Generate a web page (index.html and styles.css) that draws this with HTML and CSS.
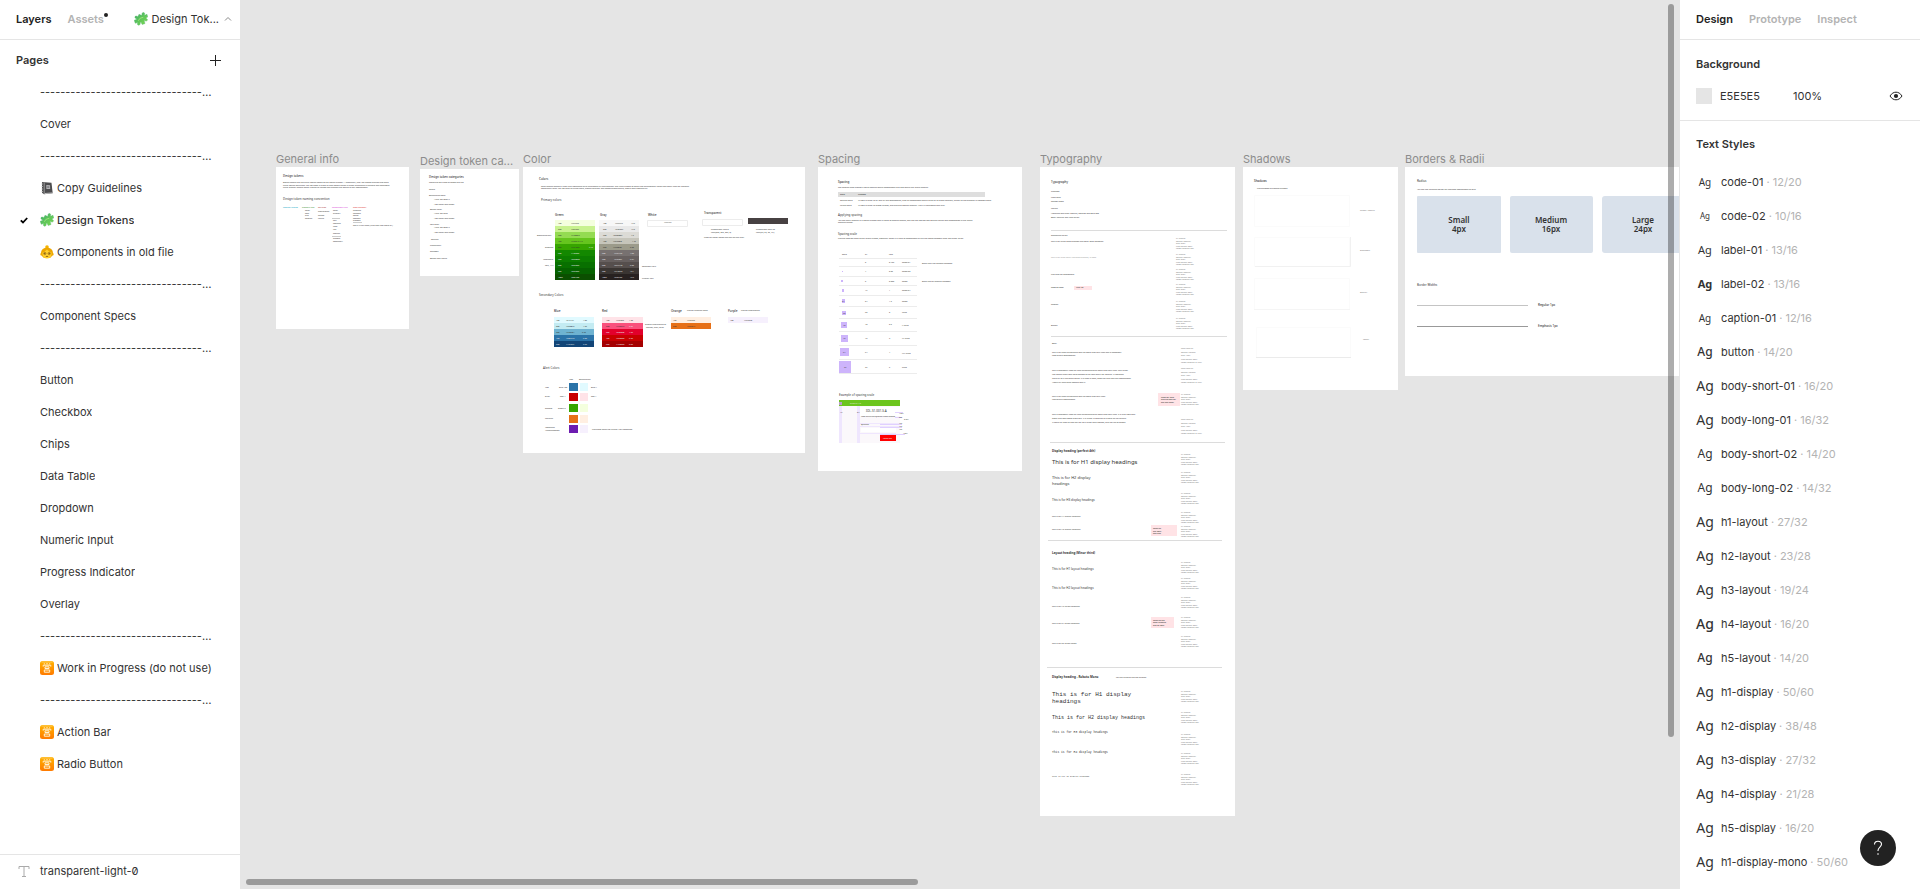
FILE: index.html
```html
<!DOCTYPE html>
<html lang="en">
<head>
<meta charset="utf-8">
<title>Design Tokens</title>
<link rel="stylesheet" href="styles.css">
</head>
<body>
<svg class="defs" aria-hidden="true">
  <defs>
    <linearGradient id="orange-fill" x1="0" y1="0" x2="0" y2="1"><stop offset="0" stop-color="#ffb300"/><stop offset="1" stop-color="#ff7a00"/></linearGradient>
    <linearGradient id="green-fill" x1="0" y1="0" x2="1" y2="1"><stop offset="0" stop-color="#3fae6a"/><stop offset="1" stop-color="#7fdc4c"/></linearGradient>
    <symbol id="puzzle" viewBox="0 0 14 14">
      <path d="M5 2.300 7.200 3.200C8 3.400 8.100 2.900 7.900 2.200 7.900.2 10.600 0 10.700 1.900 10.700 2.600 10.300 3 10.700 3.300L13 2.300 13.700 5 12 5.700C11.600 6.200 12 6.500 12.700 6.700 14.200 7.600 13.200 9.600 11.500 8.900 10.900 8.500 10.500 8.500 10.200 9L11 11.500 8.200 12.500 7.200 10.600C6.700 10.100 6.100 10.400 6.200 11.100 6.500 13 4.300 14 3.500 12.400 3.200 11.500 3.800 11.200 3.400 10.600L1.300 11.300.2 8.300 2.300 7.600C2.900 7.200 2.400 6.700 1.900 6.500.1 5.600 1 3.600 2.800 4.200 3.700 4.600 4.200 4.400 4.300 3.800Z" fill="url(#green-fill)" stroke="#54b56a" stroke-width=".4"/>
      <path d="M4.200 8.800 6.200 6.200 9.300 5.300" fill="none" stroke="#b4f080" stroke-width="1" opacity=".7"/>
    </symbol>
    <symbol id="notebook" viewBox="0 0 14 14">
      <path d="M2 1 11.500 1.800 12.700 12.300 4 13.200 2 11.800Z" fill="#4c4c4e"/>
      <path d="M4.200 1.500V13" stroke="#9a9a9a" stroke-width="1"/>
      <path d="M4.800 11.900 12.500 11.400V12.300L4.800 13Z" fill="#c9c9c9"/>
      <path d="M6.300 4 10 4.200 10.200 8 6.400 8Z" fill="#b5b5b8"/>
      <path d="M7.200 5.300H9.300V6.800H7.200Z" fill="#77777a"/>
      <path d="M1.500 3H3M1.500 5.500H3M1.500 8H3M1.500 10.500H3" stroke="#bbb" stroke-width=".8"/>
    </symbol>
    <symbol id="elder" viewBox="0 0 14 14">
      <circle cx="7" cy="2" r="1.800" fill="#f5b400"/>
      <path d="M1 8A6 5.500 0 0 1 13 8C14 8.500 13.800 10.500 12.500 10.500L10 13H4L1.500 10.500C.2 10.500 0 8.500 1 8Z" fill="#eda600"/>
      <path d="M2.500 7.500C4.500 7 6 5.500 7 4.500 8 5.500 9.500 7 11.500 7.500 12 11.500 9.500 13.500 7 13.500S2 11.500 2.500 7.500Z" fill="#ffd02f"/>
      <circle cx="4.800" cy="8.500" r="1.200" fill="none" stroke="#8b5a10" stroke-width=".6"/>
      <circle cx="9.200" cy="8.500" r="1.200" fill="none" stroke="#8b5a10" stroke-width=".6"/>
      <circle cx="4.800" cy="8.500" r=".6" fill="#4a3010"/><circle cx="9.200" cy="8.500" r=".6" fill="#4a3010"/>
      <path d="M5.800 11.600Q7 10.900 8.200 11.600" fill="none" stroke="#7a4a10" stroke-width=".8"/>
    </symbol>
    <symbol id="open-sign" viewBox="0 0 14 14">
      <rect width="14" height="14" rx="2.500" fill="url(#orange-fill)"/>
      <path d="M1.500 1H12.500" stroke="#ffd27a" stroke-width=".8"/>
      <path d="M4.200 2.300 4.800 3.500M7 2V3.500M9.800 2.300 9.200 3.500M3.200 5.600V4.200H10.800V5.600M5 5.800H9V7.500H5ZM4.300 9H9.700V11.200H4.300Z" fill="none" stroke="#fff3d6" stroke-width="1"/>
    </symbol>
    <g id="spec" class="t2 spec"><text><tspan x="0" y="1">h1-display</tspan><tspan x="0" y="4">weight: Regular</tspan><tspan x="0" y="6">Size: 27px</tspan><tspan x="0" y="9">Line-height: 32px</tspan><tspan x="0" y="11">Letter-spacing: 0px</tspan></text></g>
    <g id="spec-loose" class="t2 spec"><text><tspan x="0" y="1">body-long-01</tspan><tspan x="0" y="5">weight: Normal</tspan><tspan x="0" y="8">Size: 16px</tspan><tspan x="0" y="12">Line-height: 32px</tspan><tspan x="0" y="15">Letter-spacing: 0.16px</tspan></text></g>
  </defs>
</svg>
<div class="app">
  <aside class="panel left">
    <header class="panel-head">
      <button class="tab active">Layers</button>
      <button class="tab assets">Assets<span class="dot"></span></button>
      <button class="page-switch"><svg class="emoji"><use href="#puzzle"/></svg><span>Design Tok...</span>
        <svg class="chevron" viewBox="0 0 8 6"><path d="M1 4.500 4 1.500 7 4.500" fill="none" stroke="#8a8a8a"/></svg></button>
    </header>
    <div class="pages-head"><h2>Pages</h2>
      <button class="add" aria-label="Add page"><svg viewBox="0 0 11 11"><path d="M5.500 0V11M0 5.500H11" stroke="#222" fill="none"/></svg></button></div>
    <ul class="pages">
      <li><span class="name">--------------------------------------------------</span></li>
      <li><span class="name">Cover</span></li>
      <li><span class="name">--------------------------------------------------</span></li>
      <li><svg class="emoji"><use href="#notebook"/></svg><span class="name">Copy Guidelines</span></li>
      <li class="current"><svg class="tick" viewBox="0 0 8 7"><path d="M.8 3.300 3 5.500 7.200 1" fill="none" stroke="#000" stroke-width="1.800"/></svg><svg class="emoji"><use href="#puzzle"/></svg><span class="name">Design Tokens</span></li>
      <li><svg class="emoji"><use href="#elder"/></svg><span class="name">Components in old file</span></li>
      <li><span class="name">--------------------------------------------------</span></li>
      <li><span class="name">Component Specs</span></li>
      <li><span class="name">--------------------------------------------------</span></li>
      <li><span class="name">Button</span></li>
      <li><span class="name">Checkbox</span></li>
      <li><span class="name">Chips</span></li>
      <li><span class="name">Data Table</span></li>
      <li><span class="name">Dropdown</span></li>
      <li><span class="name">Numeric Input</span></li>
      <li><span class="name">Progress Indicator</span></li>
      <li><span class="name">Overlay</span></li>
      <li><span class="name">--------------------------------------------------</span></li>
      <li><svg class="emoji"><use href="#open-sign"/></svg><span class="name">Work in Progress (do not use)</span></li>
      <li><span class="name">--------------------------------------------------</span></li>
      <li><svg class="emoji"><use href="#open-sign"/></svg><span class="name">Action Bar</span></li>
      <li><svg class="emoji"><use href="#open-sign"/></svg><span class="name">Radio Button</span></li>
    </ul>
    <div class="layer"><svg class="type-icon" viewBox="0 0 12 11"><path d="M1 3V.5H11V3M6 .5V10.500M4 10.500H8" fill="none" stroke="#aaa"/></svg><span>transparent-light-0</span></div>
  </aside>

  <main class="canvas">
    <figure class="frame general"><figcaption>General info</figcaption>
      <svg viewBox="276 167 133 162">
        <text class="t3 strong" x="283" y="177">Design tokens</text>
        <text class="t2"><tspan x="283" y="183">Design tokens are the visual design atoms of the design system — specifically, they are named entities that store</tspan><tspan x="283" y="186">visual design attributes. We use them in place of hard-coded values in order to maintain a scalable and consistent</tspan><tspan x="283" y="188">visual system. Tokens make it easier to update and support the design of our components.</tspan></text>
        <text class="t3" x="283" y="200">Design token naming convention</text>
        <text class="t2" x="283" y="208" fill="#00a3c4">category-theme</text><text class="t2" x="302" y="208" fill="#2e8b2e">property-role</text><text class="t2" x="318" y="208" fill="#a33">attribute</text><text class="t2" x="332" y="208" fill="#d63ad6">component-type</text><text class="t2" x="353" y="208" fill="#d33">state-modifier</text>
        <path d="M332 218.500H340M332 236.500H341M353 222.500H362" stroke="#ccc"/>
        <text class="t2"><tspan x="305" y="211">color</tspan><tspan x="305" y="214">font</tspan><tspan x="305" y="216">size</tspan><tspan x="305" y="219">spacing</tspan><tspan x="318" y="212">background</tspan><tspan x="318" y="216">border</tspan><tspan x="318" y="219">radius</tspan><tspan x="333" y="211">color</tspan><tspan x="333" y="214">primary</tspan><tspan x="333" y="221">text</tspan><tspan x="333" y="224">heading</tspan><tspan x="333" y="227">label</tspan><tspan x="333" y="230">link</tspan><tspan x="333" y="234">caption</tspan><tspan x="333" y="239">success</tspan><tspan x="333" y="242">secondary</tspan><tspan x="353" y="211">disabled</tspan><tspan x="353" y="214">hovered</tspan><tspan x="353" y="216">active</tspan><tspan x="353" y="219">focused</tspan><tspan x="353" y="221">pressed</tspan><tspan x="353" y="226">add it if you need (blue-dark-low-hover-01)</tspan></text>
      </svg></figure>
    <figure class="frame categories"><figcaption>Design token ca...</figcaption>
      <svg viewBox="420 169 99 107">
        <text class="t3 strong" x="429" y="178">Design token categories</text>
        <text class="t2"><tspan x="429" y="183">These are the types of tokens we use</tspan><tspan x="429" y="190">Colors</tspan><tspan x="429" y="196">Background color</tspan><tspan x="434" y="200">• Why we need it</tspan><tspan x="434" y="205">• On hover and states</tspan><tspan x="430" y="210">Border color</tspan><tspan x="434" y="214">• Why we have</tspan><tspan x="434" y="219">• On hover and states</tspan><tspan x="430" y="225">Text color</tspan><tspan x="434" y="228">• Why we need it</tspan><tspan x="434" y="233">• On hover and states</tspan><tspan x="431" y="240">Spacing</tspan><tspan x="430" y="246">Typography</tspan><tspan x="430" y="252">Shadows</tspan><tspan x="430" y="259">Border and radius</tspan></text>
      </svg></figure>
    <figure class="frame color"><figcaption>Color</figcaption>
      <svg viewBox="523 167 282 286">
        <text class="t3 strong" x="539" y="180">Colors</text>
        <text class="t2"><tspan x="541" y="187">Color tokens support a clear and intentional style throughout all the products. The Finch system of colors has foundational values and many roles for theming</tspan><tspan x="541" y="189">meaningful roles. We use color to guide users, create hierarchy and communicate status, always with accessibility.</tspan></text>
        <text class="t3" x="541" y="201">Primary colors</text>
        <g class="t3 strong"><text x="555" y="216">Green</text><text x="600" y="216">Gray</text><text x="648" y="216">White</text><text x="704" y="214">Transparent</text></g>
        <g><path fill="#f4ffde" d="M555 220h40v6h-40z"/><path fill="#c8f28f" d="M555 226h40v6h-40z"/><path fill="#94db52" d="M555 232h40v6h-40z"/><path fill="#66c51e" d="M555 238h40v6h-40z"/><path fill="#37a500" d="M555 244h40v6h-40z"/><path fill="#138800" d="M555 250h40v6h-40z"/><path fill="#0c7d00" d="M555 256h40v6h-40z"/><path fill="#087000" d="M555 262h40v6h-40z"/><path fill="#066200" d="M555 268h40v6h-40z"/><path fill="#0b4f00" d="M555 274h40v6h-40z"/></g>
        <g><path fill="#f7f7f7" d="M599 220h40v6h-40z"/><path fill="#e9e9e9" d="M599 226h40v6h-40z"/><path fill="#dcdbd6" d="M599 232h40v6h-40z"/><path fill="#c6c5bb" d="M599 238h40v6h-40z"/><path fill="#9c9b8b" d="M599 244h40v6h-40z"/><path fill="#777170" d="M599 250h40v6h-40z"/><path fill="#67605f" d="M599 256h40v6h-40z"/><path fill="#564f4d" d="M599 262h40v6h-40z"/><path fill="#3a3532" d="M599 268h40v6h-40z"/><path fill="#272120" d="M599 274h40v6h-40z"/></g>
        <text class="t2"><tspan x="558" y="224">100</tspan><tspan x="571" y="224">#F6FFE2</tspan><tspan x="558" y="230">200</tspan><tspan x="571" y="230">#C8F28F</tspan><tspan x="558" y="236">300</tspan><tspan x="571" y="236">#94DB52</tspan><tspan x="558" y="242">400</tspan><tspan x="571" y="242">#66C51E 4.5</tspan><tspan x="558" y="248">500</tspan><tspan x="571" y="248">#37A500</tspan><tspan x="603" y="224">100</tspan><tspan x="615" y="224">#F7F7F7</tspan><tspan x="631" y="224">19.3</tspan><tspan x="603" y="230">200</tspan><tspan x="615" y="230">#E9E9E9</tspan><tspan x="631" y="230">16.2</tspan><tspan x="603" y="236">300</tspan><tspan x="613" y="236">#DCDBD6</tspan><tspan x="631" y="236">4.5</tspan><tspan x="603" y="242">400</tspan><tspan x="613" y="242">#C6C5BB</tspan><tspan x="632" y="242">1.75</tspan><tspan x="603" y="248">500</tspan><tspan x="613" y="248">#9C9B8B</tspan><tspan x="630" y="248">2.80</tspan></text>
        <text class="t2 light"><tspan x="589" y="248">3.19</tspan><tspan x="558" y="254">600</tspan><tspan x="571" y="254">#138800</tspan><tspan x="558" y="260">700</tspan><tspan x="571" y="260">#0C7D00</tspan><tspan x="558" y="266">800</tspan><tspan x="571" y="266">#087000</tspan><tspan x="558" y="272">900</tspan><tspan x="571" y="272">#066200</tspan><tspan x="558" y="278">1000</tspan><tspan x="571" y="278">#0B4F00</tspan><tspan x="602" y="254">600</tspan><tspan x="614" y="254">#777170</tspan><tspan x="630" y="254">4.82</tspan><tspan x="602" y="260">700</tspan><tspan x="614" y="260">#67605F</tspan><tspan x="630" y="260">6.24</tspan><tspan x="602" y="266">800</tspan><tspan x="614" y="266">#564F4D</tspan><tspan x="630" y="266">8.02</tspan><tspan x="602" y="272">900</tspan><tspan x="614" y="272">#3A3532</tspan><tspan x="630" y="272">12.1</tspan><tspan x="602" y="278">1000</tspan><tspan x="614" y="278">#272120</tspan><tspan x="630" y="278">15.9</tspan></text>
        <text class="t2"><tspan x="537" y="236">Decorative only</tspan><tspan x="545" y="248">Graphics</tspan><tspan x="543" y="260">Interactive</tspan><tspan x="545" y="266">Text, AAA</tspan><tspan x="642" y="267">Secondary text</tspan><tspan x="642" y="279">Primary text</tspan></text>
        <path fill="#fff" stroke="#ececec" d="M647.500 220.500h40v6h-40zM702.500 219.500h40v6h-40z"/><path fill="#474142" d="M748 218h40v6h-40z"/>
        <text class="t2"><tspan x="664" y="223">#FFFFFF</tspan><tspan x="711" y="230">transparent-light-0</tspan><tspan x="711" y="233">rgba(255, 255, 255, 0)</tspan><tspan x="704" y="238">Used for hover states and text on the layer</tspan><tspan x="756" y="230">transparent-dark-90</tspan><tspan x="756" y="233">rgba(39, 33, 32, .84)</tspan></text>
        <text class="t3" x="539" y="296">Secondary Colors</text>
        <g class="t3 strong"><text x="554" y="312">Blue</text><text x="602" y="312">Red</text><text x="671" y="312">Orange</text><text x="728" y="312">Purple</text></g>
        <text class="t2"><tspan x="687" y="311">Use for Warning icons</tspan><tspan x="741" y="311">Use for background</tspan><tspan x="645" y="325">Graphs background or</tspan><tspan x="646" y="328">notices, alert, error</tspan></text>
        <g><path fill="#e1faff" d="M554 317h40v6h-40z"/><path fill="#c3ebf2" d="M554 323h40v6h-40z"/><path fill="#6fb3d1" d="M554 329h40v6h-40z"/><path fill="#2b73a8" d="M554 335h40v6h-40z"/><path fill="#124577" d="M554 341h40v6h-40z"/>
        <path fill="#ffe3e8" d="M602 317h41v6h-41z"/><path fill="#f9507c" d="M602 323h41v6h-41z"/><path fill="#e2002b" d="M602 329h41v6h-41z"/><path fill="#c80000" d="M602 335h41v6h-41z"/><path fill="#a50000" d="M602 341h41v6h-41z"/>
        <path fill="#ffefe2" d="M671 317h40v6h-40z"/><path fill="#e67017" d="M671 323h40v6h-40z"/><path fill="#f6f0fd" d="M728 317h40v6h-40z"/></g>
        <text class="t2"><tspan x="556" y="321">100</tspan><tspan x="566" y="321">#E1FAFF</tspan><tspan x="583" y="321">1.08</tspan><tspan x="556" y="327">200</tspan><tspan x="566" y="327">#C3EBF2</tspan><tspan x="583" y="327">1.29</tspan><tspan x="556" y="333">300</tspan><tspan x="566" y="333">#6FB3D1</tspan><tspan x="582" y="333">2.32</tspan><tspan x="606" y="321">100</tspan><tspan x="616" y="321">#FFE3E8</tspan><tspan x="629" y="321">1.20</tspan><tspan x="606" y="327">200</tspan><tspan x="616" y="327">#F9507C</tspan><tspan x="673" y="321">100</tspan><tspan x="687" y="321">#FFEFE2</tspan><tspan x="673" y="327">500</tspan><tspan x="687" y="327">#E67017</tspan><tspan x="730" y="321">100</tspan><tspan x="744" y="321">#F6F0FD</tspan></text>
        <text class="t2 light"><tspan x="556" y="339">400</tspan><tspan x="566" y="339">#2B73A8</tspan><tspan x="583" y="339">5.08</tspan><tspan x="556" y="345">500</tspan><tspan x="566" y="345">#124577</tspan><tspan x="583" y="345">9.76</tspan><tspan x="629" y="327">3.27</tspan><tspan x="606" y="333">300</tspan><tspan x="616" y="333">#E2002B</tspan><tspan x="629" y="333">4.93</tspan><tspan x="606" y="339">400</tspan><tspan x="616" y="339">#C80000</tspan><tspan x="629" y="339">5.98</tspan><tspan x="606" y="345">500</tspan><tspan x="616" y="345">#A50000</tspan><tspan x="629" y="345">8.09</tspan></text>
        <text class="t3" x="543" y="369">Alert Colors</text>
        <path fill="#2b73a8" d="M569 383h9v8h-9z"/><path fill="#c80000" d="M569 393h9v8h-9z"/><path fill="#37a500" d="M569 404h9v8h-9z"/><path fill="#e67017" d="M569 415h9v8h-9z"/><path fill="#6d1cb0" d="M569 425h9v8h-9z"/>
        <path fill="#e1faff" d="M580 383h8v8h-8z"/><path fill="#ffe3e8" d="M580 393h8v8h-8z"/><path fill="#f4ffde" d="M580 404h8v8h-8z"/><path fill="#ffefe2" d="M580 415h8v8h-8z"/><path fill="#f6f0fd" d="M580 425h8v8h-8z"/>
        <text class="t2"><tspan x="569" y="380">Icon</tspan><tspan x="579" y="380">Background</tspan><tspan x="545" y="388">Info</tspan><tspan x="559" y="388">Blue-400</tspan><tspan x="591" y="388">Blue-1</tspan><tspan x="545" y="397">Error</tspan><tspan x="560" y="397">Red-4</tspan><tspan x="591" y="397">Red-1</tspan><tspan x="545" y="409">Success</tspan><tspan x="558" y="409">Green-5</tspan><tspan x="545" y="419">Warning</tspan><tspan x="545" y="428">Important</tspan><tspan x="545" y="431">Announcement</tspan><tspan x="592" y="430">Use these colors for purple Alert messages</tspan></text>
      </svg></figure>
    <figure class="frame spacing"><figcaption>Spacing</figcaption>
      <svg viewBox="818 167 204 304">
        <text class="t3 strong" x="838" y="183">Spacing</text>
        <path fill="#dedede" d="M838 192h147v5H838z"/>
        <text class="t2"><tspan x="838" y="188">The spacing scale creates a set of spacing within components and also within the layout spacing.</tspan><tspan class="strong" x="840" y="195">Scale</tspan><tspan class="strong" x="858" y="195">Purpose</tspan><tspan x="840" y="201">Spacing scale</tspan><tspan x="858" y="201">Is used in order to fill and lay out components, such as components within cards or to group controls, as well as the distance in between them</tspan><tspan x="840" y="206">Layout scale</tspan><tspan x="858" y="206">Is used in order to create layouts, margins and section spacing. Also it is consistent with grid.</tspan></text>
        <text class="t3" x="838" y="216">Applying spacing</text>
        <text class="t2"><tspan x="838" y="221">You can apply spacing in a design system with a range of spacing tokens, and use the appropriate spacing values and components in the layout</tspan><tspan x="838" y="223">scalable ranges.</tspan></text>
        <text class="t3" x="838" y="235">Spacing scale</text>
        <text class="t2" x="838" y="239">Use the smallest scale of the layout system, especially when it is used at components or fills the space between inner and outer layers</text>
        <path stroke="#ececec" d="M839 258.500h78M839 266.500h78M839 276.500h78M839 285.500h78M839 295.500h78M839 306.500h78M839 318.500h78M839 331.500h78M839 345.500h78M839 359.500h78M839 373.500h78"/>
        <g fill="#cdb4fb"><path d="M842 271h1v1h-1zM841 280h2v2h-2zM842 289h2v3h-2zM842 299h3v4h-3zM842 311h4v4h-4zM841 322h6v6h-6zM841 335h7v7h-7zM840 348h9v8h-9zM839 361h12v12h-12z"/></g>
        <text class="t2"><tspan x="842" y="255">Scale</tspan><tspan x="865" y="255">px</tspan><tspan x="889" y="255">rem</tspan><tspan x="865" y="263">2</tspan><tspan x="889" y="263">0.125</tspan><tspan x="902" y="263">space-01</tspan><tspan x="865" y="272">4</tspan><tspan x="889" y="272">0.25</tspan><tspan x="902" y="272">space-02</tspan><tspan x="865" y="282">8</tspan><tspan x="889" y="282">0.500</tspan><tspan x="902" y="282">space</tspan><tspan x="865" y="291">16</tspan><tspan x="889" y="291">1</tspan><tspan x="902" y="291">space-04</tspan><tspan x="842" y="302">24</tspan><tspan x="865" y="302">24</tspan><tspan x="889" y="302">1.5</tspan><tspan x="902" y="302">space</tspan><tspan x="843" y="314">32</tspan><tspan x="865" y="313">32</tspan><tspan x="889" y="313">2</tspan><tspan x="902" y="313">large</tspan><tspan x="843" y="326">40</tspan><tspan x="865" y="325">40</tspan><tspan x="889" y="325">2.5</tspan><tspan x="902" y="326">x-large</tspan><tspan x="843" y="339">48</tspan><tspan x="865" y="339">48</tspan><tspan x="889" y="339">3</tspan><tspan x="902" y="339">xx-large</tspan><tspan x="843" y="353">64</tspan><tspan x="865" y="353">64</tspan><tspan x="889" y="353">4</tspan><tspan x="902" y="354">xxx-large</tspan><tspan x="844" y="368">96</tspan><tspan x="865" y="368">96</tspan><tspan x="889" y="368">6</tspan><tspan x="902" y="368">huge</tspan><tspan x="922" y="264">Don’t use it for spacing between</tspan><tspan x="922" y="282">Don’t use for spacing between</tspan></text>
        <text class="t3" x="839" y="396">Example of spacing scale</text>
        <path fill="#fbf8fb" d="M839 406h61v37h-61z"/><path fill="#6cc51d" d="M839 400h61v6h-61z"/><path fill="#efe6fe" d="M839 406h3v37h-3zM857 406h3v37h-3zM860 423h40v1h-40zM860 426h40v1h-40zM860 433h36v1h-36z"/><path fill="#b5a0c4" d="M839 402h3v3h-3z"/><path fill="#fff" d="M860 407h40v9h-40zM861 428h35v4h-35z"/><path fill="#f00" d="M880 435h16v6h-16z"/>
        <path fill="none" stroke="#e0d0ff" d="M895 412.500H903M895 417.500H902M880 424.500H902M880 427.500H902M880 434.500H905"/>
        <text class="t3" x="866" y="412">IOL-S1-001-S.A</text><text class="t2" x="861" y="417">Item of buying Quarter from Market</text>
        <text class="t2"><tspan x="899" y="414">16px</tspan><tspan x="899" y="418">8px</tspan><tspan x="904" y="420">24px</tspan><tspan x="899" y="424">4px</tspan><tspan x="899" y="427">4px</tspan><tspan x="899" y="430">4px</tspan><tspan x="903" y="434">16px</tspan><tspan x="861" y="425">Quantity</tspan><tspan x="840" y="413">16</tspan><tspan x="857" y="413">24</tspan></text><text class="t2 light"><tspan x="850" y="404">CATTAIL 1.2</tspan><tspan x="883" y="439">MESSAGE</tspan></text>
      </svg></figure>
    <figure class="frame typography"><figcaption>Typography</figcaption>
      <svg viewBox="1040 167 195 649">
        <path stroke="#dcdcdc" d="M1051 230.500h176M1051 336.500h176M1050 442.500h175M1048 540.500h174M1047 667.500h175"/>
        <g fill="#ffe3e6"><path d="M1074 286h18v4h-18zM1158 393h22v13h-22zM1151 525h26v11h-26zM1151 617h23v11h-23z"/></g>
        <text class="t3 strong" x="1051" y="183">Typography</text>
        <text class="t2"><tspan x="1051" y="192">Typeface</tspan><tspan x="1051" y="198">Noto Sans</tspan><tspan x="1051" y="202">Roboto Mono</tspan><tspan x="1051" y="209">Weight</tspan><tspan x="1051" y="214">Headings and titles: Regular, Medium and Bold 500</tspan><tspan x="1051" y="218">Body: Regular and Italic styles</tspan><tspan x="1051" y="236">Supporting styles</tspan><tspan x="1051" y="242">This is for inline code snippets and small code elements.</tspan><tspan x="1051" y="258" fill="#999">This is for large multi-line code snippets, in code</tspan><tspan x="1051" y="275">Use label for component</tspan><tspan class="strong" x="1051" y="288">Used as label</tspan><tspan x="1076" y="288">label-02</tspan><tspan x="1051" y="305">Caption</tspan><tspan x="1051" y="326">Button</tspan><tspan x="1052" y="344">Body</tspan><tspan x="1052" y="353">This is for short paragraphs with no more than four lines and is commonly</tspan><tspan x="1052" y="356">used within components.</tspan><tspan x="1052" y="371">This is commonly used for long paragraphs with more than four lines. This larger</tspan><tspan x="1052" y="375">line height gives long-form content to be read easily for reading. It improves</tspan><tspan x="1052" y="379">legibility as it has more space. It is used in docs, specs for help and tips components.</tspan><tspan x="1052" y="383">Always fill long-form content with it.</tspan><tspan x="1052" y="397">This is for short paragraphs with no more than four lines</tspan><tspan x="1052" y="400">lines within components.</tspan><tspan x="1052" y="415">This is commonly used for long paragraphs with more than four lines. It is also used with</tspan><tspan x="1052" y="419">paper and read mode sized text. It is larger in features of a table for text within.</tspan><tspan x="1052" y="423">It could be used as help text for text larger than needed, with styling of spaces</tspan></text>
        <text class="t2 strong"><tspan x="1161" y="398">Used for long</tspan><tspan x="1161" y="400">and big text for</tspan><tspan x="1161" y="403">the title body.</tspan><tspan x="1153" y="529">Same as</tspan><tspan x="1153" y="532">the label</tspan><tspan x="1153" y="534">title size</tspan><tspan x="1153" y="621">Same as the</tspan><tspan x="1153" y="623">body heading</tspan><tspan x="1153" y="626">size of label</tspan></text>
        <g><use href="#spec" x="1176" y="238"/><use href="#spec" x="1176" y="254"/><use href="#spec" x="1176" y="269"/><use href="#spec" x="1176" y="284"/><use href="#spec" x="1176" y="301"/><use href="#spec" x="1176" y="318"/><use href="#spec-loose" x="1181" y="348"/><use href="#spec-loose" x="1181" y="368"/><use href="#spec" x="1181" y="394"/><use href="#spec-loose" x="1181" y="419"/><use href="#spec" x="1181" y="454"/><use href="#spec" x="1181" y="472"/><use href="#spec" x="1181" y="493"/><use href="#spec" x="1181" y="512"/><use href="#spec" x="1181" y="526"/><use href="#spec" x="1181" y="562"/><use href="#spec" x="1181" y="578"/><use href="#spec" x="1181" y="597"/><use href="#spec" x="1181" y="617"/><use href="#spec" x="1181" y="636"/><use href="#spec" x="1181" y="691"/><use href="#spec" x="1181" y="712"/><use href="#spec" x="1181" y="734"/><use href="#spec" x="1181" y="753"/><use href="#spec" x="1181" y="774"/></g>
        <text class="t3 bold" x="1052" y="452">Display heading (perfect 4th)</text>
        <text class="t6" x="1052" y="464">This is for H1 display headings</text>
        <text class="t4"><tspan x="1052" y="479">This is for H2 display</tspan><tspan x="1052" y="485">headings</tspan></text>
        <text class="t3" x="1052" y="501">This is for H3 display headings</text>
        <text class="t2"><tspan x="1052" y="517">This is for H4 display headings</tspan><tspan x="1052" y="530">This is for H5 display headings</tspan></text>
        <text class="t3 bold" x="1052" y="554">Layout heading (Minor third)</text>
        <text class="t3" x="1052" y="570">This is for H1 layout headings</text>
        <text class="t3" x="1052" y="589">This is for H2 layout headings</text>
        <text class="t2"><tspan x="1052" y="607">This is for H3 layout headings</tspan><tspan x="1052" y="624">This is for h4 layout headings</tspan><tspan x="1052" y="644">This is for h5 layout heads</tspan></text>
        <text class="t3 bold" x="1052" y="678">Display heading - Roboto Mono</text><text class="t2" x="1116" y="678">For the guide of the use of fonts</text>
        <g class="mono"><text class="t6"><tspan x="1052" y="696">This is for H1 display</tspan><tspan x="1052" y="703">headings</tspan></text><text class="t5" x="1052" y="719">This is for H2 display headings</text><text class="t3" x="1052" y="733">This is for H3 display headings</text><text class="t3" x="1052" y="753">This is for H4 display headings</text><text class="t2" x="1052" y="777">This is for H5 display headings</text></g>
      </svg></figure>
    <figure class="frame shadows"><figcaption>Shadows</figcaption>
      <svg viewBox="1243 167 155 223">
        <text class="t3 strong" x="1254" y="182">Shadows</text><text class="t2" x="1257" y="189">Use shadows to elevate surfaces</text>
        <g fill="none" stroke="#fbfbfb"><path d="M1254.500 195.500h95v31h-95zM1254.500 237.500h95v29h-95zM1254.500 278.500h95v31h-95zM1256.500 327.500h94v30h-94z"/><path stroke="#f1f1f1" d="M1350.500 237v29.500H1255"/><path stroke="#f5f5f5" d="M1254 309.500h96"/><path stroke="#ebebeb" d="M1256 357.500h95"/></g>
        <text class="t2 faint"><tspan x="1360" y="211">Raised / default</tspan><tspan x="1360" y="251">Dropdown</tspan><tspan x="1360" y="293">Overlay</tspan><tspan x="1363" y="340">Modal</tspan></text>
      </svg></figure>
    <figure class="frame borders"><figcaption>Borders &amp; Radii</figcaption>
      <svg viewBox="1405 167 460 209">
        <text class="t3" x="1417" y="182">Radius</text><text class="t2" x="1417" y="190">You can use rounding corner for interface components to style.</text>
        <g fill="#d9e1eb"><rect x="1417" y="196" width="84" height="57" rx="1"/><rect x="1510" y="196" width="83" height="57" rx="2"/><rect x="1602" y="196" width="84" height="57" rx="3"/></g>
        <g class="t8" text-anchor="middle"><text><tspan x="1459" y="223">Small</tspan><tspan x="1459" y="232">4px</tspan></text><text><tspan x="1551" y="223">Medium</tspan><tspan x="1551" y="232">16px</tspan></text><text><tspan x="1643" y="223">Large</tspan><tspan x="1643" y="232">24px</tspan></text></g>
        <text class="t3" x="1417" y="286">Border Widths</text><path stroke="#c4c4c4" d="M1417 305.500h111"/><path stroke="#999" d="M1417 326.500h111"/>
        <text class="t3 strong"><tspan x="1538" y="306">Regular 1px</tspan><tspan x="1538" y="327">Emphasis 1px</tspan></text>
      </svg></figure>
    <div class="scroll vertical"></div><div class="scroll horizontal"></div>
  </main>

  <aside class="panel right">
    <header class="panel-head"><button class="tab active">Design</button><button class="tab">Prototype</button><button class="tab">Inspect</button></header>
    <section class="background"><h2>Background</h2>
      <div class="fill"><span class="swatch"></span><span class="hex">E5E5E5</span><span class="alpha">100%</span>
        <button class="eye" aria-label="Toggle visibility"><svg viewBox="0 0 14 10"><path d="M1 5C2.800 2.200 4.800 1.200 7 1.200S11.200 2.200 13 5C11.200 7.800 9.200 8.800 7 8.800S2.800 7.800 1 5Z" fill="none" stroke="#222"/><circle cx="7" cy="5" r="2.100" fill="#222"/></svg></button></div>
    </section>
    <section class="styles"><h2>Text Styles</h2>
      <ul>
        <li><i class="s10">Ag</i>code-01<span>· 12/20</span></li>
        <li><i class="s8">Ag</i>code-02<span>· 10/16</span></li>
        <li><i class="s11">Ag</i>label-01<span>· 13/16</span></li>
        <li><i class="s11 b">Ag</i>label-02<span>· 13/16</span></li>
        <li><i class="s10">Ag</i>caption-01<span>· 12/16</span></li>
        <li><i class="s12 m">Ag</i>button<span>· 14/20</span></li>
        <li><i class="s14">Ag</i>body-short-01<span>· 16/20</span></li>
        <li><i class="s14">Ag</i>body-long-01<span>· 16/32</span></li>
        <li><i class="s12">Ag</i>body-short-02<span>· 14/20</span></li>
        <li><i class="s12">Ag</i>body-long-02<span>· 14/32</span></li>
        <li><i class="s14">Ag</i>h1-layout<span>· 27/32</span></li>
        <li><i class="s14">Ag</i>h2-layout<span>· 23/28</span></li>
        <li><i class="s14">Ag</i>h3-layout<span>· 19/24</span></li>
        <li><i class="s14 m">Ag</i>h4-layout<span>· 16/20</span></li>
        <li><i class="s12 m">Ag</i>h5-layout<span>· 14/20</span></li>
        <li><i class="s14">Ag</i>h1-display<span>· 50/60</span></li>
        <li><i class="s14">Ag</i>h2-display<span>· 38/48</span></li>
        <li><i class="s14">Ag</i>h3-display<span>· 27/32</span></li>
        <li><i class="s14">Ag</i>h4-display<span>· 21/28</span></li>
        <li><i class="s14">Ag</i>h5-display<span>· 16/20</span></li>
        <li><i class="s14">Ag</i>h1-display-mono<span>· 50/60</span></li>
      </ul>
    </section>
    <button class="help" aria-label="Help"><svg viewBox="0 0 10 16"><path d="M1.500 4.500C1.500 2.300 3 1.200 5 1.200S8.500 2.400 8.500 4.300C8.500 7 5 7.200 5 10.500V11" fill="none" stroke="#fff" stroke-width="1.100"/><circle cx="5" cy="14" r=".8" fill="#fff"/></svg></button>
  </aside>
</div>
</body>
</html>
```
FILE: styles.css
```css
* { box-sizing: border-box; }
body { margin: 0; font: 11px/16px Inter, "Liberation Sans", sans-serif; color: #333; }
button { font: inherit; color: inherit; background: none; border: 0; padding: 0; }
h2 { margin: 0; font-size: 11px; font-weight: 600; line-height: 16px; }
ul { list-style: none; margin: 0; padding: 0; }
figure { margin: 0; }
.defs { position: absolute; width: 0; height: 0; }

.app { display: flex; height: 100vh; overflow: hidden; }
.panel { flex: none; width: 240px; background: #fff; display: flex; flex-direction: column; position: relative; }
.panel-head { flex: none; display: flex; align-items: center; gap: 16px; height: 40px; padding: 0 8px 2px 16px; border-bottom: 1px solid #e5e5e5; }
.tab { font-weight: 600; color: #b3b3b3; }
.tab.active { color: #222; }
.assets { position: relative; }
.dot { position: absolute; left: 100%; top: 2px; width: 4px; height: 4px; border-radius: 50%; background: #222; }
.page-switch { display: flex; align-items: center; gap: 3px; margin-left: auto; }
.chevron { width: 8px; height: 6px; margin-left: 2px; }
.emoji { flex: none; width: 14px; height: 14px; margin-right: 3px; }
.page-switch .emoji { margin-right: 0; }

.pages-head { flex: none; display: flex; align-items: center; justify-content: space-between; height: 36px; padding: 4px 19px 0 16px; }
.add, .add svg { display: block; width: 11px; height: 11px; }
.pages { flex: 1; min-height: 0; overflow: hidden; }
.pages li { display: flex; align-items: center; height: 32px; padding: 0 28px 0 40px; position: relative; }
.name { overflow: hidden; text-overflow: ellipsis; white-space: nowrap; }
.current { font-weight: 500; color: #333; }
.tick { position: absolute; left: 20px; width: 8px; height: 7px; }
.layer { flex: none; display: flex; align-items: center; gap: 10px; height: 35px; padding: 0 0 2px 18px; border-top: 1px solid #e5e5e5; font-feature-settings: "zero"; }
.type-icon { width: 12px; height: 11px; }

.canvas { flex: 1; min-width: 0; position: relative; overflow: hidden; background: #e5e5e5; }
.frame { position: absolute; top: 151px; }
.frame figcaption { height: 16px; font-size: 11px; line-height: 16px; color: #8c8c8c; white-space: nowrap; }
.frame svg { display: block; width: 100%; background: #fff; fill: #333; font-family: "Noto Sans", sans-serif; }
.general { left: 36px; width: 133px; }
.categories { left: 180px; top: 153px; width: 99px; }
.color { left: 283px; width: 282px; }
.spacing { left: 578px; width: 204px; }
.typography { left: 800px; width: 195px; }
.shadows { left: 1003px; width: 155px; }
.borders { left: 1165px; width: 460px; }
.t2 { font-size: 2px; }
.t3 { font-size: 3px; }
.t4 { font-size: 4px; }
.t5 { font-size: 5px; }
.t6 { font-size: 6px; }
.t8 { font-size: 8px; font-weight: 600; }
.strong { font-weight: 500; }
.bold { font-weight: 700; }
.light { fill: #e8e8e8; }
.faint { fill: #777; }
.mono { font-family: "Liberation Mono", monospace; }
.spec { font-family: "Noto Sans", sans-serif; fill: #777; }

.scroll { position: absolute; border-radius: 3px; background: rgba(0, 0, 0, .32); }
.vertical { top: 4px; right: 5px; width: 6px; height: 82.400%; }
.horizontal { left: 6px; bottom: 4px; width: 46.700%; height: 6px; }

.right { border-left: 1px solid #e5e5e5; width: 241px; }
.background { flex: none; padding: 16px 16px 8px; border-bottom: 1px solid #e5e5e5; }
.fill { display: flex; align-items: center; height: 32px; margin-top: 8px; }
.swatch { width: 16px; height: 16px; margin-right: 8px; background: #e5e5e5; }
.hex { width: 73px; }
.eye { margin: 0 1px 0 auto; }
.eye svg { display: block; width: 14px; height: 10px; }
.styles { flex: 1; min-height: 0; overflow: hidden; padding: 15px 16px 0; }
.styles ul { margin-top: 13px; }
.styles li { display: flex; align-items: center; height: 34px; }
.styles i { width: 18px; margin-right: 7px; text-align: center; font-family: "Noto Sans", sans-serif; font-style: normal; }
.styles span { margin-left: 3px; color: #b3b3b3; }
.s8 { font-size: 8px; }
.s10 { font-size: 10px; }
.s11 { font-size: 11px; }
.s12 { font-size: 12px; }
.s14 { font-size: 14px; }
.m { font-weight: 500; }
.b { font-weight: 700; }
.help { position: absolute; right: 24px; bottom: 23px; width: 36px; height: 36px; border-radius: 50%; background: #222; display: flex; align-items: center; justify-content: center; }
.help svg { width: 10px; height: 16px; }
```
